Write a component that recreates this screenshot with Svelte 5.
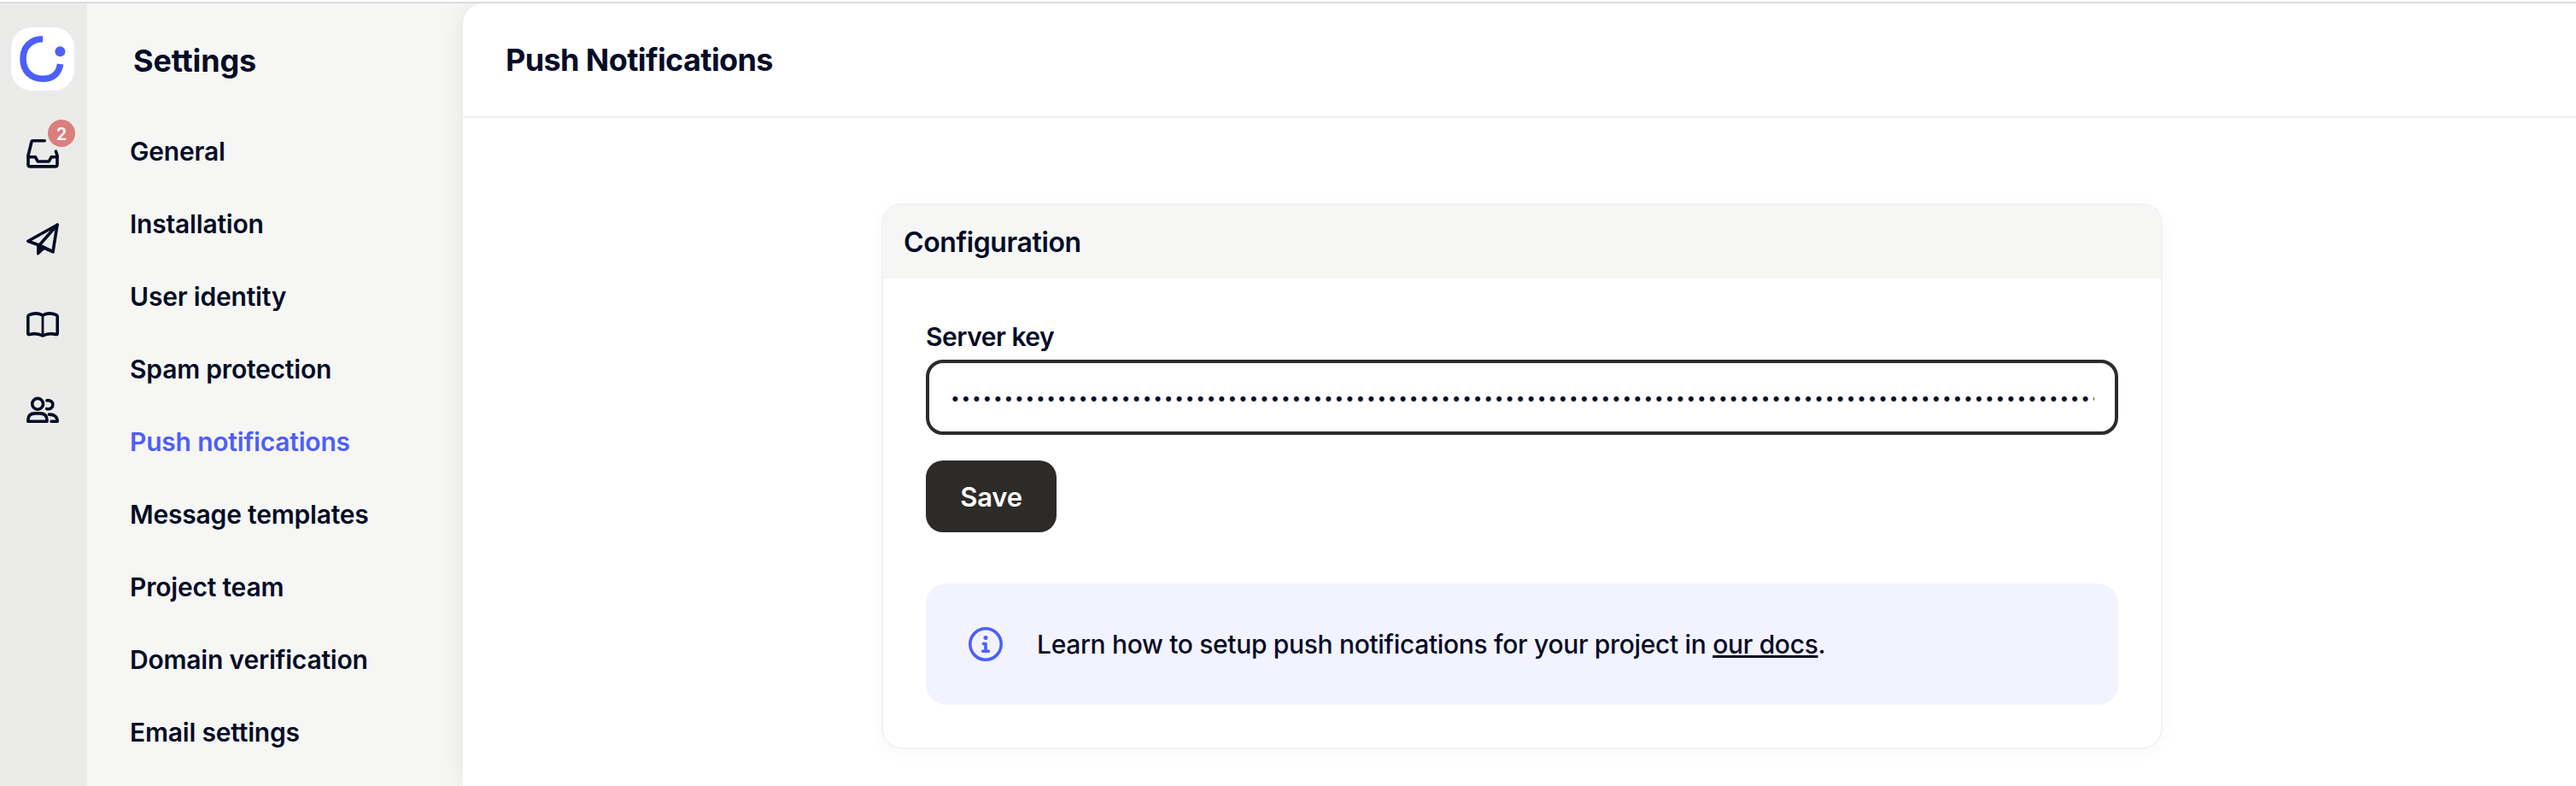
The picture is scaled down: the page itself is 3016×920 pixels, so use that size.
<script lang="ts">
  type NavItem = { label: string; active?: boolean };

  const navItems: NavItem[] = [
    { label: 'General' },
    { label: 'Installation' },
    { label: 'User identity' },
    { label: 'Spam protection' },
    { label: 'Push notifications', active: true },
    { label: 'Message templates' },
    { label: 'Project team' },
    { label: 'Domain verification' },
    { label: 'Email settings' },
  ];

  let unread = $state(2);
  let serverKey = $state('x'.repeat(152));
</script>

<div class="app">
  <nav class="rail">
    <a class="logo" href="#home" aria-label="Home">
      <svg viewBox="0 0 74 74" width="74" height="74" fill="none">
        <path d="M37 13.8C23 13.8 14 23 14 37C14 51 23.3 60.3 37.3 60.3C48.5 60.3 56 54 57.6 43" stroke="#4d5ffa" stroke-width="7.6" />
        <circle cx="57.4" cy="28.2" r="6" fill="#4d5ffa" />
      </svg>
    </a>
    <a class="rail-item" href="#inbox" aria-label="Inbox">
      <svg viewBox="0 0 40 40" width="40" height="40">
        <path d="M22.3 4.7H8.3Q7.3 4.7 7 5.8L3 22V32.4Q3 34.9 5.5 34.9H34.5Q37 34.9 37 32.4V22L35.4 17.2" />
        <path d="M3 23.8H11.5L14.2 29H27.2L30 23.8H37" />
      </svg>
      <span class="badge">{unread}</span>
    </a>
    <a class="rail-item" href="#outbound" aria-label="Outbound">
      <svg viewBox="0 0 40 40" width="40" height="40">
        <path d="M16.5 27.2L2.8 22.3L37 3.2L32 34.6L22 30.4" />
        <path d="M37 3.2L16 27L32 34.6" />
        <path class="fin" d="M14.5 27.5V37L20.8 31.2Z" />
      </svg>
    </a>
    <a class="rail-item" href="#articles" aria-label="Articles">
      <svg viewBox="0 0 40 40" width="40" height="40">
        <path d="M20 32.9C15 30.4 9 30.2 4.6 31.4Q2.8 31.9 2.8 30.4V10.6Q2.8 9.2 4 8.6C9 6.4 15.5 6.6 20 9C24.5 6.6 31 6.4 36 8.6Q37.2 9.2 37.2 10.6V30.4Q37.2 31.9 35.4 31.4C31 30.2 25 30.4 20 32.9Z" />
        <path class="spine" d="M20 9V32" />
      </svg>
    </a>
    <a class="rail-item" href="#contacts" aria-label="Contacts">
      <svg viewBox="0 0 40 40" width="40" height="40">
        <circle cx="14.1" cy="12.8" r="6.4" />
        <path d="M2.8 33.3V31.8Q2.8 23.9 11 23.9H16.8Q25 23.9 25 31.8V33.3Z" />
        <path d="M24.9 8.7C29 8.2 31.8 10.4 31.8 13.7C31.8 17.2 28.8 19.4 24.6 18.5" />
        <path d="M27.4 25.1C33.6 24.8 37.2 27.8 37.2 33.3H30" />
      </svg>
    </a>
  </nav>

  <aside class="sidebar">
    <h2>Settings</h2>
    <ul>
      {#each navItems as item}
        <li><a class:active={item.active} href="#settings">{item.label}</a></li>
      {/each}
    </ul>
  </aside>

  <main>
    <header><h1>Push Notifications</h1></header>
    <section class="card">
      <div class="card-header">Configuration</div>
      <form class="card-body">
        <label for="server-key">Server key</label>
        <input id="server-key" type="password" bind:value={serverKey} />
        <button type="button">Save</button>
        <div class="info">
          <svg viewBox="0 0 40 40" width="40" height="40">
            <circle cx="20" cy="20" r="18.2" />
            <path d="M17.4 19.5H20V28.2M16.6 28.2H23.4" />
            <circle class="dot" cx="20" cy="12.4" r="2.5" />
          </svg>
          <p>Learn how to setup push notifications for your project in <a href="#docs">our docs</a>.</p>
        </div>
      </form>
    </section>
  </main>
</div>

<style>
  :global(body) {
    background: #fff;
    overflow: hidden;
  }

  .app {
    box-sizing: border-box;
    display: flex;
    height: 918px;
    margin-top: 2px;
    border-top: 2px solid #dcdcdc;
    background: #f6f6f4;
    color: #050c26;
    font-family: Inter, 'Liberation Sans', sans-serif;
    font-size: 30px;
    font-weight: 600;
    overflow: hidden;
  }

  a {
    color: inherit;
    text-decoration: none;
  }

  .rail {
    width: 102px;
    flex: none;
    background: #ebebe9;
  }

  .logo {
    display: block;
    width: 74px;
    height: 74px;
    margin: 28px 0 54px 13px;
    background: #fff;
    border-radius: 24px;
  }

  .rail-item {
    position: relative;
    display: block;
    width: 40px;
    height: 40px;
    margin: 0 0 60px 30px;
  }

  .rail-item svg {
    display: block;
    fill: none;
    stroke: #050c26;
    stroke-width: 3.6;
    stroke-linecap: round;
    stroke-linejoin: round;
  }

  .rail-item .fin {
    fill: #050c26;
    stroke-width: 3;
  }

  .rail-item .spine {
    stroke-width: 2.8;
  }

  .badge {
    position: absolute;
    top: -20px;
    left: 26px;
    width: 32px;
    height: 32px;
    border-radius: 50%;
    background: #db7e7c;
    color: #fff;
    font-size: 20px;
    line-height: 34px;
    text-align: center;
  }

  .sidebar {
    width: 440px;
    flex: none;
  }

  h1,
  h2 {
    margin: 0;
    font-size: 36px;
    font-weight: 700;
    line-height: 44px;
  }

  h2 {
    padding: 45px 0 0 54px;
    letter-spacing: -0.15px;
  }

  ul {
    margin: 42px 0 0;
    padding: 0 0 0 50px;
    list-style: none;
  }

  li {
    height: 85px;
    line-height: 85px;
    letter-spacing: -0.2px;
  }

  .active {
    color: #4d5ffa;
  }

  main {
    flex: 1;
    border-top-left-radius: 24px;
    background: #fff;
    box-shadow: 0 0 30px rgba(0, 0, 0, 0.08);
  }

  header {
    height: 132px;
    border-bottom: 2px solid #f0f0f0;
  }

  h1 {
    padding: 44px 0 0 50px;
    letter-spacing: -0.6px;
  }

  .card {
    box-sizing: border-box;
    width: 1500px;
    height: 639px;
    margin: 100px 0 0 490px;
    border: 2px solid #f2f2f2;
    border-radius: 24px;
    overflow: hidden;
    box-shadow: 0 4px 20px rgba(0, 0, 0, 0.03);
  }

  .card-header {
    height: 86px;
    padding-left: 24px;
    background: #f6f6f4;
    font-size: 32px;
    line-height: 88px;
    letter-spacing: -0.39px;
  }

  .card-body {
    padding: 50px;
  }

  label {
    display: block;
    height: 45px;
    line-height: 37px;
    letter-spacing: -0.5px;
  }

  input {
    box-sizing: border-box;
    display: block;
    width: 1396px;
    height: 88px;
    padding: 3px 24px 0 25px;
    border: 4px solid #2d2b29;
    border-radius: 20px;
    outline: none;
    color: #050c26;
    font: 400 19px Inter;
    letter-spacing: 1.797px;
  }

  button {
    display: block;
    width: 153px;
    height: 84px;
    margin-top: 30px;
    border: 0;
    border-radius: 20px;
    background: #2d2b29;
    color: #fff;
    font: 600 31px Inter;
    letter-spacing: -0.2px;
  }

  .info {
    display: flex;
    align-items: center;
    gap: 40px;
    height: 142px;
    margin-top: 60px;
    padding-left: 50px;
    border-radius: 24px;
    background: #f3f3ff;
  }

  .info svg {
    fill: none;
    stroke: #4d5ffa;
    stroke-width: 3.6;
    stroke-linecap: round;
    stroke-linejoin: round;
  }

  .info .dot {
    fill: #4d5ffa;
    stroke: none;
  }

  .info p {
    margin: 0;
    font-weight: 500;
    letter-spacing: -0.33px;
  }

  .info a {
    text-decoration: underline;
    text-decoration-thickness: 3px;
  }
</style>
